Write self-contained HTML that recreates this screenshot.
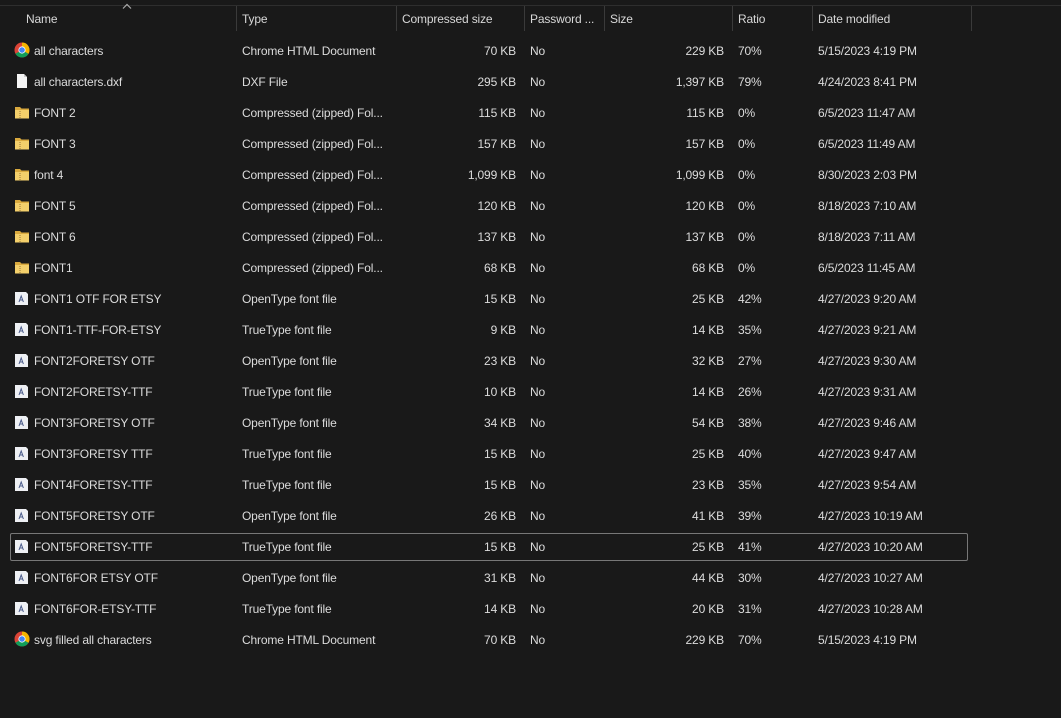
<!DOCTYPE html>
<html><head><meta charset="utf-8"><style>
html,body{margin:0;padding:0;background:#191919;width:1061px;height:718px;overflow:hidden}
body{font-family:"Liberation Sans",sans-serif;font-size:12px;color:#dcdcdc;position:relative;letter-spacing:-0.15px}
.hl{position:absolute;left:0;top:5px;width:1061px;height:1px;background:#2e2e2e}
.h{position:absolute;top:12px;color:#d8d8d8}
.d{position:absolute;top:6px;width:1px;height:25px;background:#3a3a3a}
.r{position:absolute;left:0;width:1061px;height:31px}
.r span{position:absolute;top:9px;white-space:nowrap}
.n{left:34px}.t{left:242px}.c{right:545px}.p{left:530px}.s{right:337px}.ra{left:738px}.dt{left:818px}
.sel{position:absolute;left:10px;top:533px;width:956px;height:26px;border:1px solid #777;border-radius:2px}
.ic{position:absolute;left:14px;top:7px;width:16px;height:16px}
</style></head><body>
<div class="hl"></div>
<div class="h" style="left:26px">Name</div>
<svg style="position:absolute;left:122px;top:3px" width="10" height="7"><path d="M1 5.5L5 1.5L9 5.5" stroke="#aaa" stroke-width="1.2" fill="none"/></svg>
<div class="d" style="left:236px"></div><div class="h" style="left:242px">Type</div>
<div class="d" style="left:396px"></div><div class="h" style="left:402px">Compressed size</div>
<div class="d" style="left:524px"></div><div class="h" style="left:530px">Password ...</div>
<div class="d" style="left:604px"></div><div class="h" style="left:610px">Size</div>
<div class="d" style="left:732px"></div><div class="h" style="left:738px">Ratio</div>
<div class="d" style="left:812px"></div><div class="h" style="left:818px">Date modified</div>
<div class="d" style="left:971px"></div>
<div class="sel"></div>

<svg width="0" height="0" style="position:absolute"><defs>
<g id="chrome"><circle cx="8" cy="8" r="7.5" fill="#db4437"/><path d="M8 8 L14.5 11.75 A7.5 7.5 0 0 1 1.5 11.75Z" fill="#0f9d58"/><path d="M8 8 L8 0.5 A7.5 7.5 0 0 1 14.5 11.75Z" fill="#f4b400"/><circle cx="8" cy="8" r="3.6" fill="#fff"/><circle cx="8" cy="8" r="2.8" fill="#4285f4"/></g>
<g id="folder"><path d="M1 3h5l1.5 1.5H15v10H1z" fill="#d9a93e"/><path d="M1 6h14v8.5H1z" fill="#f3cf6b"/><path d="M6 7v7" stroke="#b8934a" stroke-dasharray="1 1" stroke-width="1.5"/></g>
<g id="doc"><path d="M3 1h7l3 3v11H3z" fill="#f4f4f4"/><path d="M10 1v3h3" fill="#ccc"/></g>
<g id="font"><path d="M1 2h11l2 2v11H1z" fill="#eef0f4"/><path d="M5 12l2.2-6 2.2 6M5.8 10h3" stroke="#4a5b8a" stroke-width="1" fill="none"/></g>
</defs></svg>

<div class="r" style="top:35px"><svg class="ic"><use href="#chrome"/></svg><span class="n">all characters</span><span class="t">Chrome HTML Document</span><span class="c">70 KB</span><span class="p">No</span><span class="s">229 KB</span><span class="ra">70%</span><span class="dt">5/15/2023 4:19 PM</span></div>
<div class="r" style="top:66px"><svg class="ic"><use href="#doc"/></svg><span class="n">all characters.dxf</span><span class="t">DXF File</span><span class="c">295 KB</span><span class="p">No</span><span class="s">1,397 KB</span><span class="ra">79%</span><span class="dt">4/24/2023 8:41 PM</span></div>
<div class="r" style="top:97px"><svg class="ic"><use href="#folder"/></svg><span class="n">FONT 2</span><span class="t">Compressed (zipped) Fol...</span><span class="c">115 KB</span><span class="p">No</span><span class="s">115 KB</span><span class="ra">0%</span><span class="dt">6/5/2023 11:47 AM</span></div>
<div class="r" style="top:128px"><svg class="ic"><use href="#folder"/></svg><span class="n">FONT 3</span><span class="t">Compressed (zipped) Fol...</span><span class="c">157 KB</span><span class="p">No</span><span class="s">157 KB</span><span class="ra">0%</span><span class="dt">6/5/2023 11:49 AM</span></div>
<div class="r" style="top:159px"><svg class="ic"><use href="#folder"/></svg><span class="n">font 4</span><span class="t">Compressed (zipped) Fol...</span><span class="c">1,099 KB</span><span class="p">No</span><span class="s">1,099 KB</span><span class="ra">0%</span><span class="dt">8/30/2023 2:03 PM</span></div>
<div class="r" style="top:190px"><svg class="ic"><use href="#folder"/></svg><span class="n">FONT 5</span><span class="t">Compressed (zipped) Fol...</span><span class="c">120 KB</span><span class="p">No</span><span class="s">120 KB</span><span class="ra">0%</span><span class="dt">8/18/2023 7:10 AM</span></div>
<div class="r" style="top:221px"><svg class="ic"><use href="#folder"/></svg><span class="n">FONT 6</span><span class="t">Compressed (zipped) Fol...</span><span class="c">137 KB</span><span class="p">No</span><span class="s">137 KB</span><span class="ra">0%</span><span class="dt">8/18/2023 7:11 AM</span></div>
<div class="r" style="top:252px"><svg class="ic"><use href="#folder"/></svg><span class="n">FONT1</span><span class="t">Compressed (zipped) Fol...</span><span class="c">68 KB</span><span class="p">No</span><span class="s">68 KB</span><span class="ra">0%</span><span class="dt">6/5/2023 11:45 AM</span></div>
<div class="r" style="top:283px"><svg class="ic"><use href="#font"/></svg><span class="n">FONT1 OTF FOR ETSY</span><span class="t">OpenType font file</span><span class="c">15 KB</span><span class="p">No</span><span class="s">25 KB</span><span class="ra">42%</span><span class="dt">4/27/2023 9:20 AM</span></div>
<div class="r" style="top:314px"><svg class="ic"><use href="#font"/></svg><span class="n">FONT1-TTF-FOR-ETSY</span><span class="t">TrueType font file</span><span class="c">9 KB</span><span class="p">No</span><span class="s">14 KB</span><span class="ra">35%</span><span class="dt">4/27/2023 9:21 AM</span></div>
<div class="r" style="top:345px"><svg class="ic"><use href="#font"/></svg><span class="n">FONT2FORETSY OTF</span><span class="t">OpenType font file</span><span class="c">23 KB</span><span class="p">No</span><span class="s">32 KB</span><span class="ra">27%</span><span class="dt">4/27/2023 9:30 AM</span></div>
<div class="r" style="top:376px"><svg class="ic"><use href="#font"/></svg><span class="n">FONT2FORETSY-TTF</span><span class="t">TrueType font file</span><span class="c">10 KB</span><span class="p">No</span><span class="s">14 KB</span><span class="ra">26%</span><span class="dt">4/27/2023 9:31 AM</span></div>
<div class="r" style="top:407px"><svg class="ic"><use href="#font"/></svg><span class="n">FONT3FORETSY OTF</span><span class="t">OpenType font file</span><span class="c">34 KB</span><span class="p">No</span><span class="s">54 KB</span><span class="ra">38%</span><span class="dt">4/27/2023 9:46 AM</span></div>
<div class="r" style="top:438px"><svg class="ic"><use href="#font"/></svg><span class="n">FONT3FORETSY TTF</span><span class="t">TrueType font file</span><span class="c">15 KB</span><span class="p">No</span><span class="s">25 KB</span><span class="ra">40%</span><span class="dt">4/27/2023 9:47 AM</span></div>
<div class="r" style="top:469px"><svg class="ic"><use href="#font"/></svg><span class="n">FONT4FORETSY-TTF</span><span class="t">TrueType font file</span><span class="c">15 KB</span><span class="p">No</span><span class="s">23 KB</span><span class="ra">35%</span><span class="dt">4/27/2023 9:54 AM</span></div>
<div class="r" style="top:500px"><svg class="ic"><use href="#font"/></svg><span class="n">FONT5FORETSY OTF</span><span class="t">OpenType font file</span><span class="c">26 KB</span><span class="p">No</span><span class="s">41 KB</span><span class="ra">39%</span><span class="dt">4/27/2023 10:19 AM</span></div>
<div class="r" style="top:531px"><svg class="ic"><use href="#font"/></svg><span class="n">FONT5FORETSY-TTF</span><span class="t">TrueType font file</span><span class="c">15 KB</span><span class="p">No</span><span class="s">25 KB</span><span class="ra">41%</span><span class="dt">4/27/2023 10:20 AM</span></div>
<div class="r" style="top:562px"><svg class="ic"><use href="#font"/></svg><span class="n">FONT6FOR ETSY OTF</span><span class="t">OpenType font file</span><span class="c">31 KB</span><span class="p">No</span><span class="s">44 KB</span><span class="ra">30%</span><span class="dt">4/27/2023 10:27 AM</span></div>
<div class="r" style="top:593px"><svg class="ic"><use href="#font"/></svg><span class="n">FONT6FOR-ETSY-TTF</span><span class="t">TrueType font file</span><span class="c">14 KB</span><span class="p">No</span><span class="s">20 KB</span><span class="ra">31%</span><span class="dt">4/27/2023 10:28 AM</span></div>
<div class="r" style="top:624px"><svg class="ic"><use href="#chrome"/></svg><span class="n">svg filled all characters</span><span class="t">Chrome HTML Document</span><span class="c">70 KB</span><span class="p">No</span><span class="s">229 KB</span><span class="ra">70%</span><span class="dt">5/15/2023 4:19 PM</span></div>
</body></html>
